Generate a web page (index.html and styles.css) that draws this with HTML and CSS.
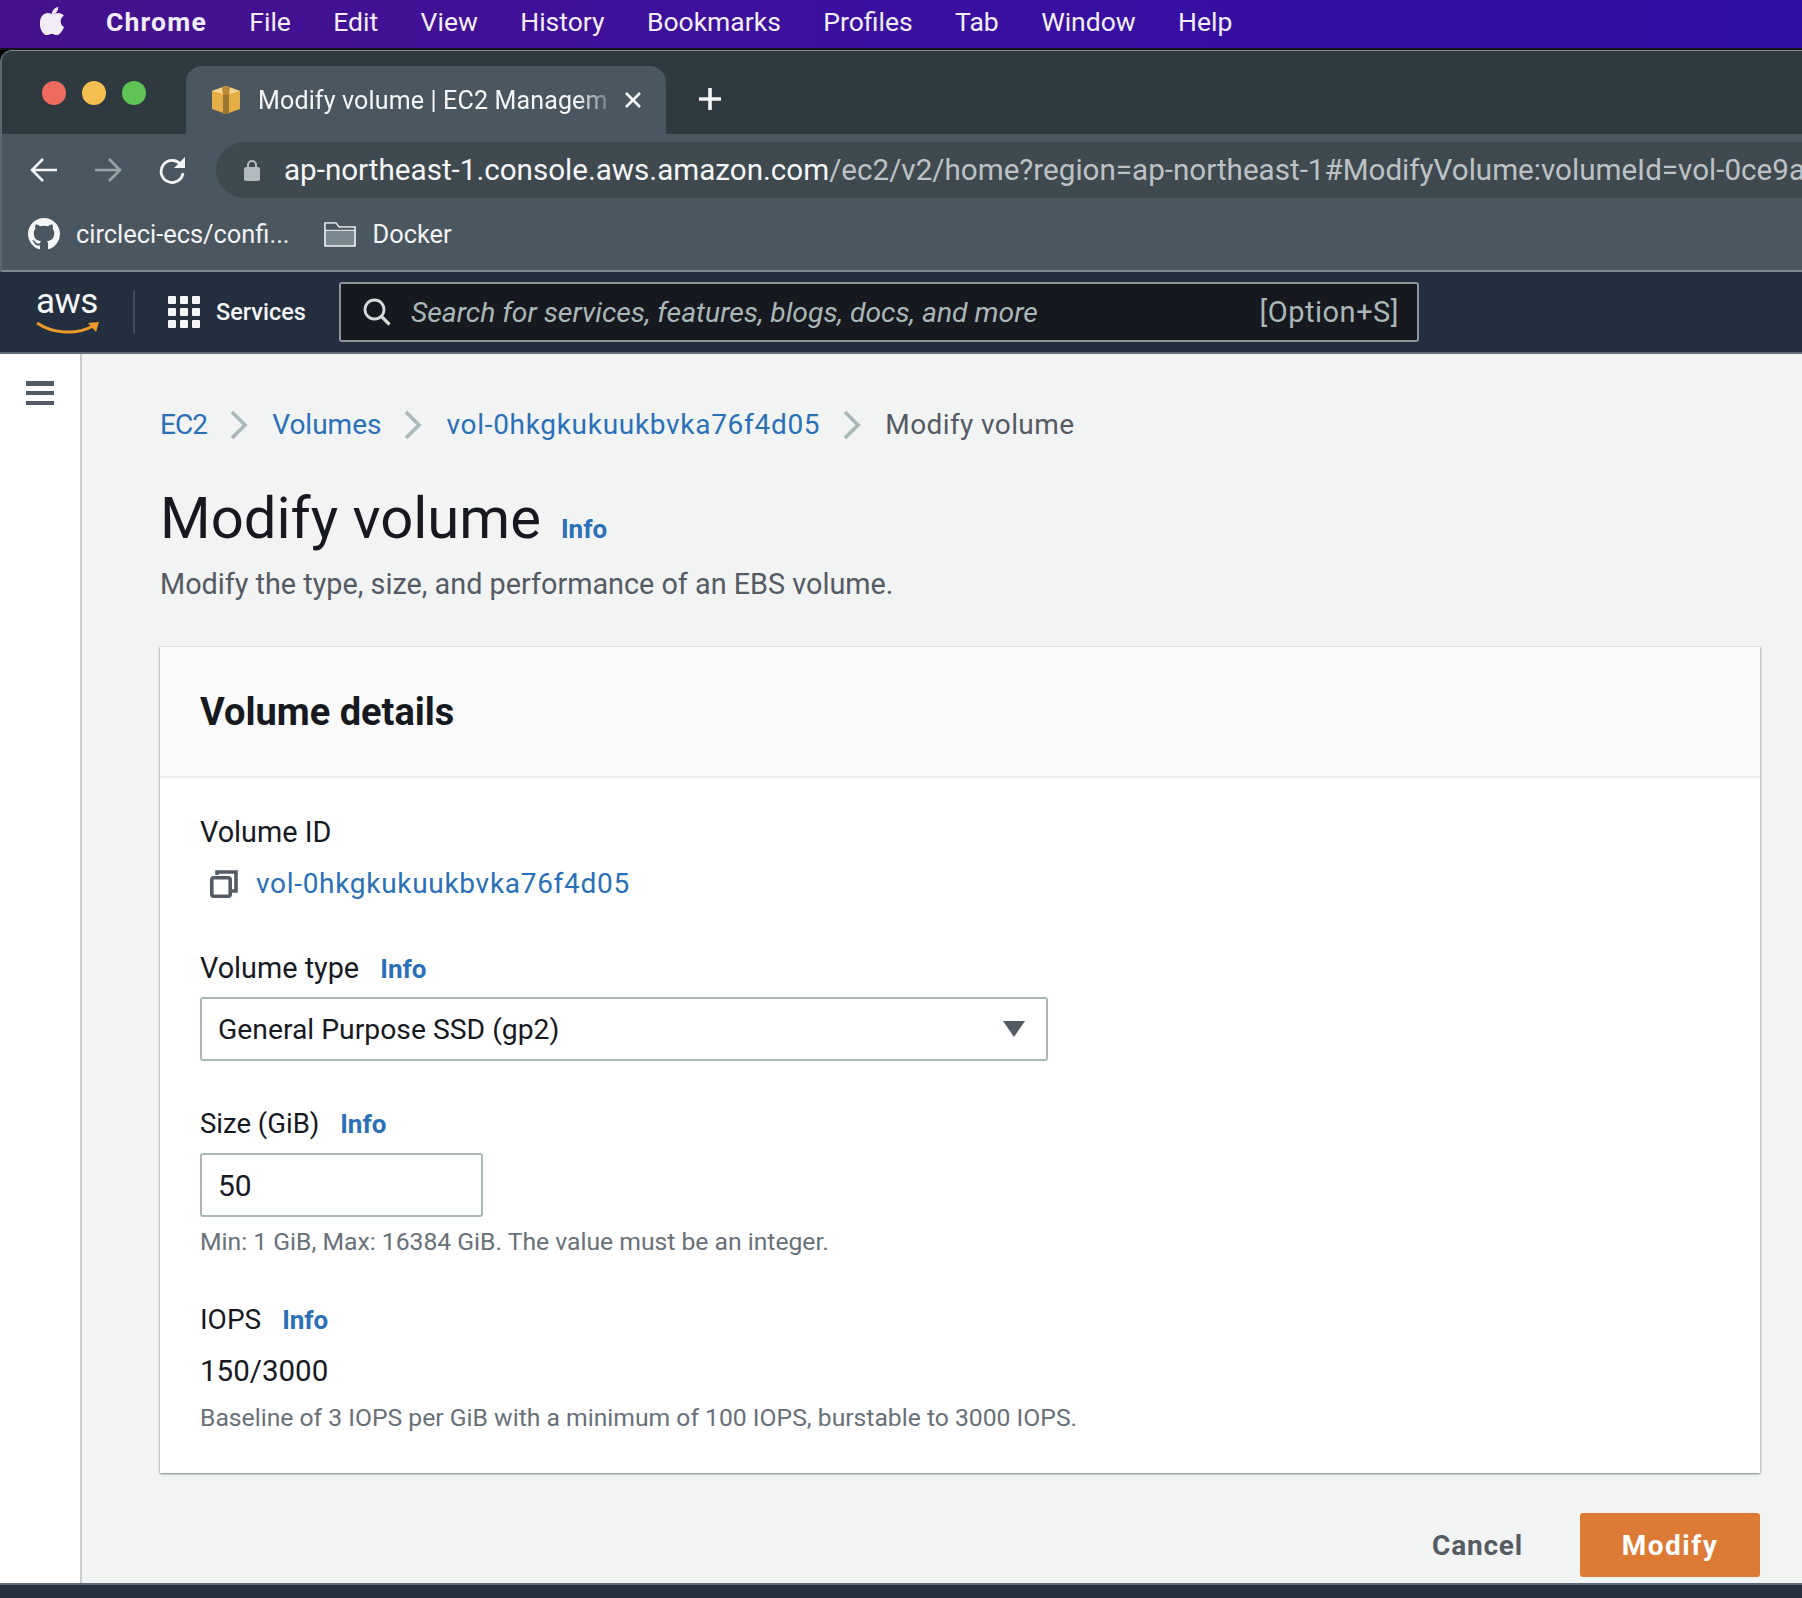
FILE: index.html
```html
<!DOCTYPE html>
<html lang="en">
<head>
<meta charset="utf-8">
<title>Modify volume | EC2 Management Console</title>
<link rel="stylesheet" href="styles.css">
</head>
<body>
<div class="screen">
  <header class="menubar">
    <svg class="apple" viewBox="0 0 24 28" aria-hidden="true"><path fill="#f1ecf6" d="M17 1c.2 2-.6 3.700-1.700 5-1.100 1.300-2.800 2.200-4.400 2.100-.2-1.800.7-3.700 1.700-4.800C13.800 2 15.600 1.100 17 1zM22.700 20.300c-.7 1.600-1 2.300-1.900 3.700-1.300 1.900-3 4.200-5.100 4.200-1.900 0-2.400-1.200-4.900-1.200s-3.100 1.200-4.900 1.200c-2.100 0-3.700-2.100-4.900-4C-1.700 19-.8 12.400 1.300 9.700 2.800 7.800 5 6.700 7 6.700c2.200 0 3.500 1.200 5.200 1.200 1.700 0 2.700-1.200 5.200-1.200 1.800 0 3.700 1 5.100 2.700-4.500 2.500-3.800 8.900.200 10.900z"/></svg>
    <nav class="menu-items">
      <span class="menu-app">Chrome</span>
      <span>File</span><span>Edit</span><span>View</span><span>History</span><span>Bookmarks</span><span>Profiles</span><span>Tab</span><span>Window</span><span>Help</span>
    </nav>
  </header>

  <div class="browser">
    <div class="tabstrip">
      <div class="traffic"><i class="dot red"></i><i class="dot yellow"></i><i class="dot green"></i></div>
      <div class="tab">
        <svg class="favicon" viewBox="0 0 28 28" aria-hidden="true"><path fill="#e5ad45" d="M0 5 14 0l14 5v18l-14 5-14-5z"/><path fill="#f4d48c" d="M0 5 14 0l14 5-14 4z"/><path fill="#9a7630" d="M11 9h6v19h-6z"/><path fill="#b98a33" d="M14 0l4 1-1 8h-6l-1-8z"/></svg>
        <span class="tab-title">Modify volume | EC2 Managem</span>
        <svg class="tab-close" viewBox="0 0 18 18" aria-hidden="true"><path d="M2 2l14 14M16 2 2 16" stroke="#f3f5f6" stroke-width="2.600" fill="none"/></svg>
      </div>
      <svg class="newtab" viewBox="0 0 24 24" aria-hidden="true"><path d="M12 1v22M1 12h22" stroke="#f3f5f6" stroke-width="3.600" fill="none"/></svg>
    </div>

    <div class="toolbar">
      <svg class="nav-icon" viewBox="0 0 28 26" aria-hidden="true"><path d="M27 13H3M13 2 2 13l11 11" stroke="#f2f4f5" stroke-width="2.600" fill="none"/></svg>
      <svg class="nav-icon nav-forward" viewBox="0 0 28 26" aria-hidden="true"><path d="M1 13h24M15 2l11 11-11 11" stroke="#99a3a9" stroke-width="2.600" fill="none"/></svg>
      <svg class="nav-icon nav-reload" viewBox="0 0 28 28" aria-hidden="true"><path d="M23 9a11 11 0 1 0 2 8" stroke="#f2f4f5" stroke-width="2.800" fill="none"/><path d="M27 1v11H16z" fill="#f2f4f5"/></svg>
      <div class="urlbar">
        <svg class="lock" viewBox="0 0 16 22" aria-hidden="true"><path d="M4 9V6a4 4 0 0 1 8 0v3" stroke="#b4bbbf" stroke-width="2" fill="none"/><rect y="8" width="16" height="14" rx="2" fill="#b4bbbf"/></svg>
        <span class="url"><span class="url-host">ap-northeast-1.console.aws.amazon.com</span>/ec2/v2/home?region=ap-northeast-1#ModifyVolume:volumeId=vol-0ce9a</span>
      </div>
    </div>

    <div class="bookmarks">
      <svg class="gh" viewBox="0 0 16 16" aria-hidden="true"><path fill="#f4f6f7" d="M8 0C3.580 0 0 3.580 0 8c0 3.540 2.290 6.530 5.470 7.590.4.070.55-.17.55-.38 0-.19-.01-.82-.01-1.490-2.010.37-2.530-.49-2.690-.94-.09-.23-.48-.94-.82-1.130-.28-.15-.68-.52-.01-.53.63-.01 1.080.58 1.230.82.720 1.210 1.870.87 2.330.66.070-.52.280-.87.510-1.070-1.780-.2-3.640-.89-3.640-3.950 0-.87.310-1.590.82-2.150-.08-.2-.36-1.020.08-2.120 0 0 .67-.21 2.200.82.640-.18 1.320-.27 2-.27s1.360.09 2 .27c1.530-1.040 2.200-.82 2.200-.82.440 1.100.16 1.920.08 2.120.51.560.82 1.270.82 2.150 0 3.070-1.870 3.750-3.650 3.950.29.250.54.730.54 1.480 0 1.070-.01 1.930-.01 2.200 0 .21.150.46.550.38A8.010 8.010 0 0 0 16 8c0-4.420-3.580-8-8-8z"/></svg>
      <span class="bm-label bm-first">circleci-ecs/confi...</span>
      <svg class="folder" viewBox="0 0 32 25" aria-hidden="true"><path d="M1 24V1h11l3 4h16v19z" fill="#7c8890" stroke="#f1f3f4" stroke-width="1.600"/><path d="M1 8h30" stroke="#f1f3f4" stroke-width="1.600"/><path d="M1.800 1.800h10l2.800 4h15.600v2H1.800z" fill="#4a5660"/></svg>
      <span class="bm-label">Docker</span>
    </div>
  </div>

  <div class="awsnav">
    <div class="aws-logo">
      <span class="aws-word">aws</span>
      <svg class="aws-smile" viewBox="0 0 64 14" aria-hidden="true"><path d="M1 2c16 11 40 12 56 3" stroke="#ec9a28" stroke-width="3" fill="none"/><path d="M52 2l11-1-3 10z" fill="#ec9a28"/></svg>
    </div>
    <span class="nav-divider"></span>
    <svg class="grid" viewBox="0 0 32 32" aria-hidden="true"><g fill="#f4f6f7"><rect width="8" height="8" rx="1"/><rect x="12" width="8" height="8" rx="1"/><rect x="24" width="8" height="8" rx="1"/><rect y="12" width="8" height="8" rx="1"/><rect x="12" y="12" width="8" height="8" rx="1"/><rect x="24" y="12" width="8" height="8" rx="1"/><rect y="24" width="8" height="8" rx="1"/><rect x="12" y="24" width="8" height="8" rx="1"/><rect x="24" y="24" width="8" height="8" rx="1"/></g></svg>
    <span class="services">Services</span>
    <div class="search">
      <svg class="search-icon" viewBox="0 0 28 28" aria-hidden="true"><circle cx="11.500" cy="11.500" r="9.500" stroke="#d5dbdb" stroke-width="2.800" fill="none"/><path d="M18 18l8.500 8.500" stroke="#d5dbdb" stroke-width="3.200"/></svg>
      <span class="search-text">Search for services, features, blogs, docs, and more</span>
      <span class="search-key">[Option+S]</span>
    </div>
  </div>

  <div class="workspace">
    <aside class="sidebar">
      <div class="hamburger"><i></i><i></i><i></i></div>
    </aside>
    <main class="main">
      <nav class="crumbs">
        <a class="link crumb-short">EC2</a>
        <svg class="chev" viewBox="0 0 18 30" aria-hidden="true"><path d="M2 2l13 13L2 28" stroke="#aab7b8" stroke-width="3.600" fill="none"/></svg>
        <a class="link">Volumes</a>
        <svg class="chev" viewBox="0 0 18 30" aria-hidden="true"><path d="M2 2l13 13L2 28" stroke="#aab7b8" stroke-width="3.600" fill="none"/></svg>
        <a class="link link-id">vol-0hkgkukuukbvka76f4d05</a>
        <svg class="chev" viewBox="0 0 18 30" aria-hidden="true"><path d="M2 2l13 13L2 28" stroke="#aab7b8" stroke-width="3.600" fill="none"/></svg>
        <span class="crumb-current">Modify volume</span>
      </nav>
      <div class="title-row">
        <h1 class="title">Modify volume</h1>
        <a class="info info-title">Info</a>
      </div>
      <p class="desc">Modify the type, size, and performance of an EBS volume.</p>

      <section class="card">
        <div class="card-head"><h2 class="card-title">Volume details</h2></div>
        <div class="card-body">
          <div class="label label-first">Volume ID</div>
          <div class="id-row">
            <svg class="copy" viewBox="0 0 28 28" aria-hidden="true"><rect x="1.800" y="7.800" width="18.400" height="18.400" rx="2" stroke="#545b64" stroke-width="3.600" fill="none"/><path d="M7 5V2h19v19h-4" stroke="#545b64" stroke-width="3.600" fill="none"/></svg>
            <a class="link link-id">vol-0hkgkukuukbvka76f4d05</a>
          </div>

          <div class="label label-type">Volume type <a class="info">Info</a></div>
          <div class="field field-select">
            <span>General Purpose SSD (gp2)</span>
            <svg class="caret" viewBox="0 0 22 18" aria-hidden="true"><path d="M0 1h22L11 17z" fill="#545b64"/></svg>
          </div>

          <div class="label label-size">Size (GiB) <a class="info">Info</a></div>
          <div class="field field-input">50</div>
          <p class="hint hint-size">Min: 1 GiB, Max: 16384 GiB. The value must be an integer.</p>

          <div class="label label-iops">IOPS <a class="info">Info</a></div>
          <div class="value">150/3000</div>
          <p class="hint hint-iops">Baseline of 3 IOPS per GiB with a minimum of 100 IOPS, burstable to 3000 IOPS.</p>
        </div>
      </section>

      <div class="actions">
        <span class="cancel">Cancel</span>
        <span class="modify">Modify</span>
      </div>
    </main>
  </div>
  <footer class="footer"></footer>
</div>
</body>
</html>
```
FILE: styles.css
```css
* { box-sizing: border-box; }
html, body { margin: 0; padding: 0; }
body { font-family: Roboto, "Noto Sans", sans-serif; background: #000; }
.screen { width: 1802px; height: 1598px; overflow: hidden; display: flex; flex-direction: column; }

/* macOS menu bar */
.menubar { height: 50px; flex: none; display: flex; align-items: center; padding: 0 0 5px 40px; color: #f2edf8; font-size: 26.500px; border-bottom: 2px solid #15121f; background: linear-gradient(90deg, #46128c, #3a10a0 50%, #2f0ca5); }
.apple { width: 26px; height: 29px; flex: none; margin-right: 40px; margin-top: -2px; }
.menu-items { display: flex; gap: 42.400px; }
.menu-app { font-weight: 700; letter-spacing: 1.200px; }

/* Browser chrome */
.browser { flex: none; background: #4a5761; border-top: 1px solid #7f8a90; border-left: 2px solid #5b6670; border-radius: 12px 0 0 0; }
.tabstrip { height: 83px; background: #2f3a40; display: flex; border-radius: 10px 0 0 0; position: relative; }
.traffic { display: flex; gap: 16px; padding: 30px 0 0 40px; width: 184px; flex: none; }
.dot { width: 24px; height: 24px; border-radius: 50%; display: block; }
.red { background: #ef6a5f; }
.yellow { background: #f5bf4f; }
.green { background: #5fc454; }
.tab { width: 480px; height: 68px; margin-top: 15px; background: #4a5761; border-radius: 16px 16px 0 0; display: flex; align-items: center; padding: 0 24px 0 26px; flex: none; }
.favicon { width: 28px; height: 28px; flex: none; margin-right: 18px; }
.tab-title { color: #f4f6f7; font-size: 25px; letter-spacing: .15px; white-space: nowrap; -webkit-mask-image: linear-gradient(90deg, #000 91%, rgba(0,0,0,.25)); mask-image: linear-gradient(90deg, #000 91%, rgba(0,0,0,.25)); }
.tab-close { width: 18px; height: 18px; flex: none; margin-left: auto; }
.newtab { width: 24px; height: 24px; flex: none; margin: 36px 0 0 32px; }

.toolbar { height: 72px; display: flex; align-items: center; padding: 0 0 0 28px; position: relative; }
.nav-icon { width: 28px; height: 26px; flex: none; }
.nav-forward { margin-left: 36px; }
.nav-reload { margin-left: 36px; height: 28px; }
.urlbar { margin-left: 30px; height: 56px; flex: 1; min-width: 0; background: #3f4a50; border-radius: 28px 0 0 28px; display: flex; align-items: center; padding-left: 28px; overflow: hidden; }
.lock { width: 16px; height: 22px; flex: none; margin-right: 24px; }
.url { font-size: 29.600px; color: #bcc2c6; white-space: nowrap; }
.url-host { color: #f4f6f7; }

.bookmarks { height: 66px; display: flex; align-items: center; padding: 0 0 8px 26px; border-bottom: 2px solid #7f8a90; }
.gh { width: 32px; height: 32px; flex: none; margin-right: 16px; }
.folder { width: 32px; height: 25px; flex: none; margin-right: 17px; }
.bm-label { color: #f1f3f4; font-size: 25.400px; white-space: nowrap; }
.bm-first { margin-right: 34px; }

/* AWS console nav */
.awsnav { height: 82px; flex: none; background: #232f3e; display: flex; align-items: center; padding-left: 36px; border-bottom: 2px solid #5f6b76; }
.aws-logo { width: 64px; height: 46px; flex: none; position: relative; }
.aws-word { position: absolute; left: 0; top: -9px; font-size: 35px; letter-spacing: -.5px; line-height: 44px; color: #f4f6f7; }
.aws-smile { position: absolute; left: 0; bottom: 0; width: 64px; height: 14px; }
.nav-divider { width: 2px; height: 44px; background: #414c59; margin: 0 33px; flex: none; }
.grid { width: 32px; height: 32px; flex: none; margin-right: 16px; }
.services { color: #f4f6f7; font-size: 23.500px; font-weight: 500; width: 123px; flex: none; }
.search { width: 1080px; height: 60px; flex: none; background: #16191f; border: 2px solid #8d9699; border-radius: 3px; display: flex; align-items: center; padding: 0 18px 0 22px; }
.search-icon { width: 28px; height: 28px; flex: none; margin-right: 20px; }
.search-text { font-style: italic; color: #aab7b8; font-size: 28.300px; white-space: nowrap; }
.search-key { margin-left: auto; color: #aab7b8; font-size: 29px; letter-spacing: .5px; }

/* Workspace */
.workspace { flex: 1; min-height: 0; display: flex; background: #f2f3f3; }
.sidebar { width: 82px; flex: none; background: #fff; border-right: 2px solid #c9cfd0; padding: 27px 0 0 26px; }
.hamburger { width: 28px; display: flex; flex-direction: column; gap: 5.300px; }
.hamburger i { display: block; height: 4.500px; background: #545b64; }
.main { flex: 1; min-width: 0; padding: 51px 42px 0 78px; color: #16191f; }

.link { color: #2a70b9; }
.link-id { letter-spacing: .7px; }
.crumb-short { letter-spacing: -.9px; }
.crumbs { height: 40px; display: flex; align-items: center; font-size: 28px; line-height: 40px; }
.chev { width: 18px; height: 30px; flex: none; margin: 0 24px 0 23px; }
.crumb-current { color: #545b64; letter-spacing: .4px; }

.title-row { display: flex; align-items: baseline; margin-top: 41px; height: 64px; }
.title { margin: 0; font-size: 58px; line-height: 64px; font-weight: 400; color: #16191f; }
.info { color: #2a70b9; font-weight: 700; font-size: 26px; margin-left: 16px; }
.info-title { margin-left: 20px; }
.desc { margin: 14px 0 0; font-size: 28.800px; line-height: 40px; color: #545b64; }

.card { margin-top: 43px; height: 826px; background: #fff; box-shadow: 0 1px 2px #7a8788, 0 0 0 1px #e4e7e7, 1px 0 1px rgba(0, 28, 36, .3); }
.card-head { height: 131px; background: #fafafa; border-bottom: 2px solid #eaeded; padding: 0 40px; display: flex; align-items: center; }
.card-title { margin: 0; font-size: 38px; font-weight: 700; color: #16191f; }
.card-body { padding: 36px 40px 0; }

.label { font-size: 28.800px; line-height: 36px; color: #16191f; }
.label .info { margin-left: 14px; }
.label-type { margin-top: 48px; }
.label-size { margin-top: 45px; font-size: 27.500px; }
.label-iops { margin-top: 44px; font-size: 28px; }
.id-row { display: flex; align-items: center; margin-top: 16px; font-size: 28px; line-height: 36px; padding-left: 10px; }
.copy { width: 28px; height: 28px; flex: none; margin-right: 18px; }
.field { border: 2px solid #aab7b8; border-radius: 3px; background: #fff; font-size: 28.300px; color: #16191f; display: flex; align-items: center; padding-left: 16px; }
.field-select { width: 848px; height: 64px; margin-top: 10px; padding-right: 21px; justify-content: space-between; }
.caret { width: 22px; height: 18px; flex: none; }
.field-input { width: 283px; height: 64px; margin-top: 11px; font-size: 30px; }
.hint { margin: 0; font-size: 24.700px; line-height: 32px; color: #687078; }
.hint-size { margin-top: 9px; }
.value { margin-top: 15px; font-size: 29.500px; line-height: 36px; color: #16191f; }
.hint-iops { margin-top: 13px; }

.actions { display: flex; align-items: center; justify-content: flex-end; margin-top: 40px; }
.cancel { color: #545b64; font-size: 28px; font-weight: 700; letter-spacing: .8px; margin-right: 57px; }
.modify { width: 180px; height: 64px; background: #dd7a35; color: #fff; font-size: 28px; font-weight: 700; letter-spacing: 1.500px; border-radius: 3px; display: flex; align-items: center; justify-content: center; }

.footer { height: 15px; flex: none; background: #252f3e; border-top: 2px solid #5f6b76; }
```
